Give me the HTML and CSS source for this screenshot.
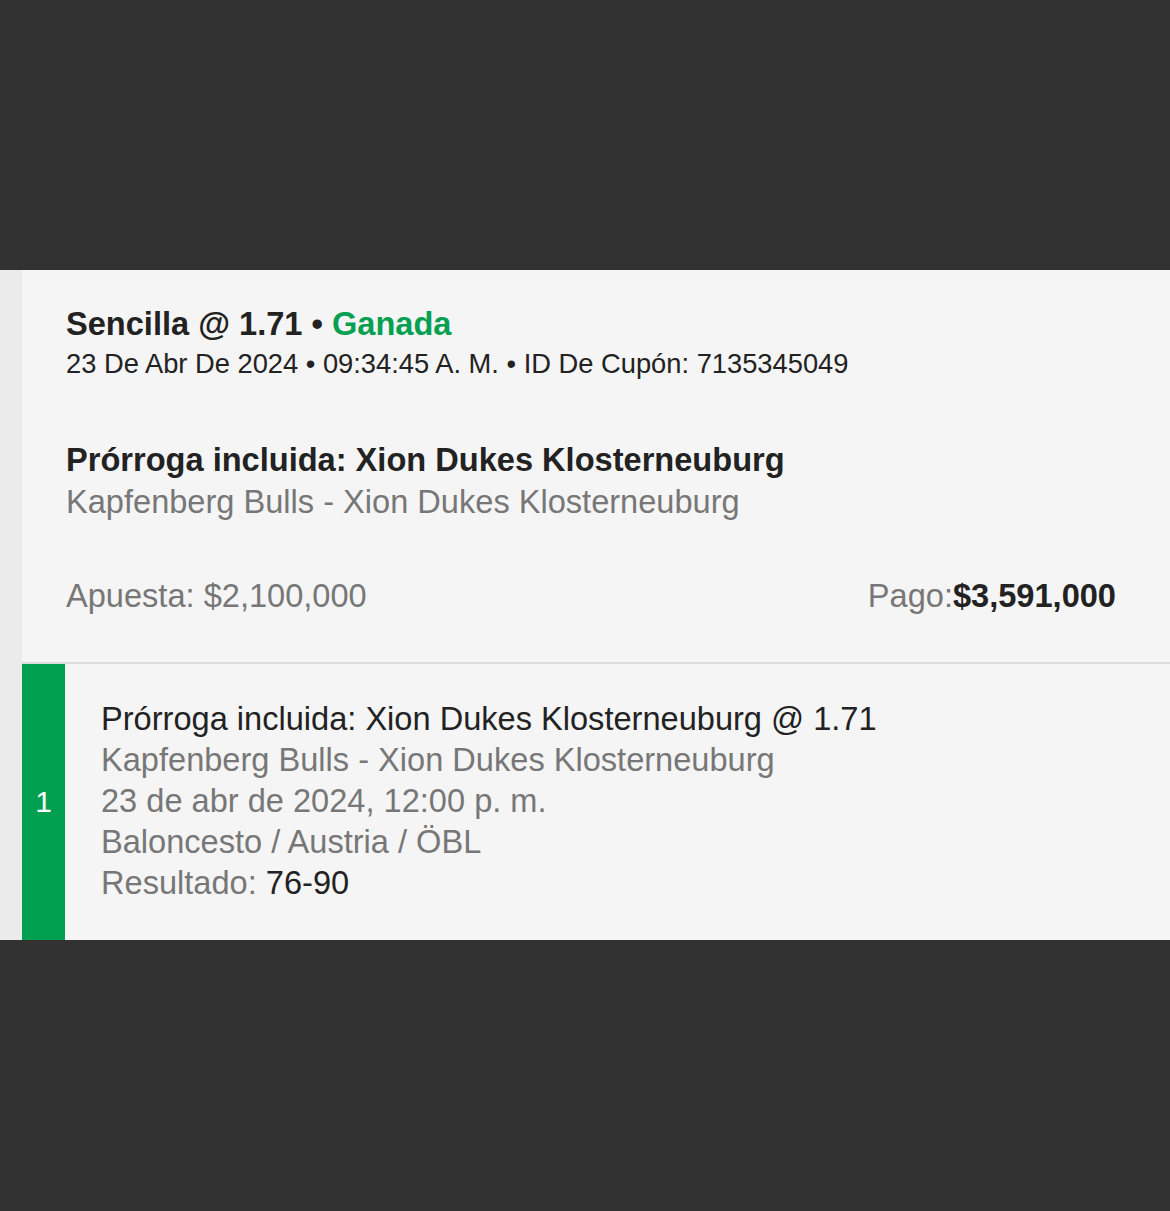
FILE: index.html
```html
<!DOCTYPE html>
<html lang="es">
<head>
    <meta charset="UTF-8">
    <title>Cupón</title>
    <link rel="stylesheet" href="styles.css">
</head>
<body>

<div class="ticket">
    <div class="side"></div>
    <div class="main">
        <div class="summary">
            <div class="title">Sencilla @ 1.71 • <span class="won">Ganada</span></div>
            <div class="meta">23 De Abr De 2024 • 09:34:45 A. M. • ID De Cupón: 7135345049</div>

            <div class="market">Prórroga incluida: Xion Dukes Klosterneuburg</div>
            <div class="event">Kapfenberg Bulls - Xion Dukes Klosterneuburg</div>

            <div class="amounts">
                <span class="stake">Apuesta: $2,100,000</span>
                <span class="payout">Pago:<strong>$3,591,000</strong></span>
            </div>
        </div>

        <div class="leg">
            <div class="leg-num">1</div>
            <div class="leg-body">
                <div class="dark">Prórroga incluida: Xion Dukes Klosterneuburg @ 1.71</div>
                <div>Kapfenberg Bulls - Xion Dukes Klosterneuburg</div>
                <div>23 de abr de 2024, 12:00 p. m.</div>
                <div>Baloncesto / Austria / ÖBL</div>
                <div>Resultado: <span class="dark">76-90</span></div>
            </div>
        </div>
    </div>
</div>

</body>
</html>
```

FILE: styles.css
```css
body {
    margin: 0;
    background-color: #323232;
    font-family: "Liberation Sans", Arial, sans-serif;
}
.ticket {
    display: flex;
    margin-top: 270px;
    background-color: #f5f5f5;
}
.side {
    width: 22px;
    background-color: #ebebeb;
}
.main {
    flex: 1;
}
.summary {
    padding: 36px 54px 0 44px;
    border-bottom: 2px solid #dcdcdc;
    height: 394px;
    box-sizing: border-box;
}
.title {
    font-size: 32.6px;
    font-weight: bold;
    color: #222;
    line-height: 36px;
}
.won {
    color: #06a052;
}
.meta {
    margin-top: 3px;
    font-size: 27.3px;
    color: #222;
    line-height: 38px;
}
.market {
    margin-top: 56px;
    font-size: 32.6px;
    font-weight: bold;
    color: #222;
    line-height: 42px;
}
.event {
    font-size: 32.6px;
    color: #777;
    line-height: 42px;
}
.amounts {
    display: flex;
    justify-content: space-between;
    margin-top: 52px;
    font-size: 32.6px;
    color: #777;
    line-height: 42px;
}
.payout strong {
    color: #222;
}
.leg {
    display: flex;
    height: 276px;
}
.leg-num {
    width: 43px;
    background-color: #00a050;
    color: #fff;
    font-size: 30px;
    display: flex;
    align-items: center;
    justify-content: center;
}
.leg-body {
    padding: 34px 0 0 36px;
    font-size: 32.6px;
    color: #777;
    line-height: 41px;
}
.dark {
    color: #222;
}
```
